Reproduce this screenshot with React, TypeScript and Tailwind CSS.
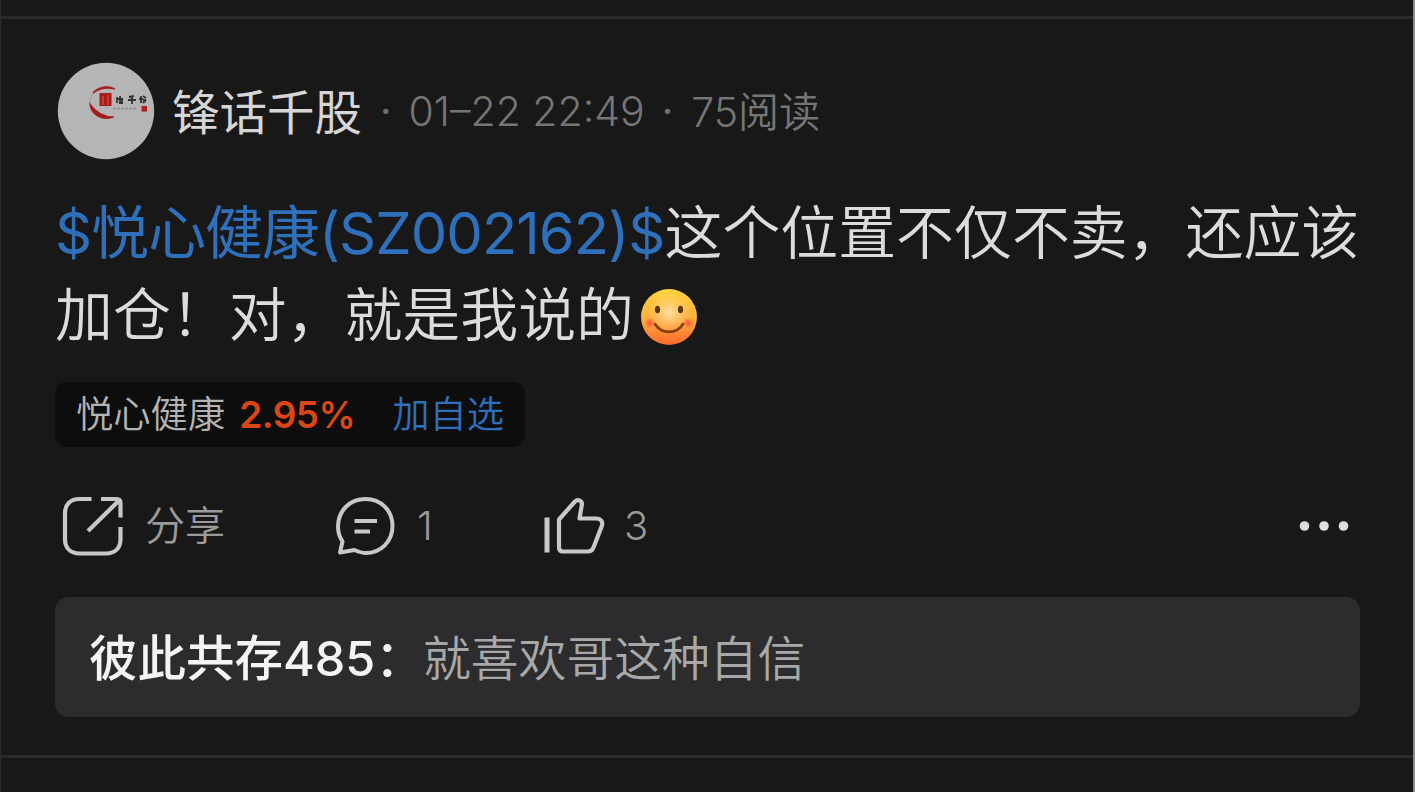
function Avatar() {
  return (
    <svg className="h-[98px] w-[98px] flex-shrink-0" viewBox="0 0 98 98">
      <circle cx="49" cy="49" r="48.200" fill="#b5b5b5" />
      {/* Brush ring around the seal */}
      <path
        d="M57 26C47 21 34 28 33 40c-1 11 9 18 24 15"
        fill="none"
        stroke="#b5a0a0"
        strokeWidth="1.400"
      />
      <path
        d="M58 27C50 23 41 25 36 31c5-4 13-6 22-4ZM33 42c1 11 12 17 24 13-9 0-17-3-24-13Z"
        fill="#a51c1c"
        stroke="#a51c1c"
        strokeWidth="1.200"
      />
      <rect x="42.500" y="31" width="12" height="13" fill="#b01818" />
      <path
        d="M46 34v9M51 33v10"
        stroke="#c98080"
        strokeWidth="0.800"
        fill="none"
      />
      <path
        d="M60 35v6M63 34v7M61 37h5M65 38v4M62 41h4M72 35l5-1M71 38h8M75 35v7M84 34v7M82 37h4M86 34l3 2M86 38h3M86 41l3-3"
        stroke="#333"
        strokeWidth="1.800"
        fill="none"
      />
      <path d="M56 46.500h23" stroke="#959595" strokeWidth="2" strokeDasharray="3 1" />
      <rect x="84.500" y="44" width="5.500" height="5.500" fill="#b01c1c" />
    </svg>
  );
}

function SmileIcon() {
  return (
    <svg className="h-[58px] w-[58px]" viewBox="0 0 58 58">
      <defs>
        <linearGradient id="face" x1="0" y1="0" x2="0" y2="1">
          <stop offset="0" stopColor="#ffd53c" />
          <stop offset="0.5" stopColor="#ffb040" />
          <stop offset="1" stopColor="#ff6a2c" />
        </linearGradient>
        <radialGradient id="glow" cx="0.5" cy="0.42" r="0.38">
          <stop offset="0" stopColor="#ffe6b0" stopOpacity="0.9" />
          <stop offset="1" stopColor="#ffd070" stopOpacity="0" />
        </radialGradient>
        <radialGradient id="cheek">
          <stop offset="0" stopColor="#ff4a35" stopOpacity="0.95" />
          <stop offset="1" stopColor="#ff5a35" stopOpacity="0" />
        </radialGradient>
      </defs>
      <circle cx="29" cy="29" r="28" fill="url(#face)" />
      <circle cx="29" cy="29" r="28" fill="url(#glow)" />
      <circle cx="10" cy="35" r="5.500" fill="url(#cheek)" />
      <circle cx="48" cy="35" r="5.500" fill="url(#cheek)" />
      <ellipse cx="17.500" cy="21.500" rx="2.600" ry="3.800" fill="#573611" />
      <ellipse cx="40.500" cy="21.500" rx="2.600" ry="3.800" fill="#573611" />
      <path
        d="M15 36c6 10.500 22 10.500 28 0"
        stroke="#82410f"
        strokeWidth="2.600"
        strokeLinecap="round"
        fill="none"
      />
    </svg>
  );
}

function ShareIcon() {
  return (
    <svg
      className="h-[64px] w-[64px]"
      viewBox="0 0 64 64"
      fill="none"
      stroke="#c8c8c8"
      strokeWidth="4.200"
      strokeLinejoin="round"
    >
      <path d="M30.500 5H18.500C9.500 5 4 10.500 4 19v26c0 9 5.500 14.500 14.500 14.500H45c9 0 14.500-5.500 14.500-14.500V33" />
      <path d="M40 5h15.500c2.800 0 4 1.200 4 4v14.500" />
      <path d="M58 6.500 27 37" />
    </svg>
  );
}

function CommentIcon() {
  return (
    <svg
      className="h-[64px] w-[64px]"
      viewBox="0 0 64 64"
      fill="none"
      stroke="#c8c8c8"
      strokeWidth="4"
      strokeLinejoin="round"
    >
      <path d="M6 58.500 8.500 47.500C5.500 43 4 38 4 32.500 4 16.500 16 5 31.500 5S58.500 16.500 58.500 32 47 59 31.500 59C27.500 59 24 57.500 20.500 56Z" />
      <path d="M20.500 27H43M20.500 37.500h15.500" />
    </svg>
  );
}

function LikeIcon() {
  return (
    <svg
      className="h-[64px] w-[64px]"
      viewBox="0 0 64 64"
      fill="none"
      stroke="#c8c8c8"
      strokeWidth="4.200"
      strokeLinejoin="round"
    >
      <path d="M4 23.500V58.500" strokeWidth="5" />
      <path d="M16 25.500 31.500 8C34.500 4.500 39.500 6.500 38.800 11L36.500 24.500H53c5 0 7.300 3.500 5.800 7.500L50.500 53.500c-1.200 3-2.500 4-5.500 4H20c-3 0-4-1.500-4-4Z" />
    </svg>
  );
}

function MoreIcon() {
  return (
    <svg className="h-[16px] w-[54px]" viewBox="0 0 54 16" fill="#dedede">
      <circle cx="7.500" cy="8" r="4.800" />
      <circle cx="27" cy="8" r="4.800" />
      <circle cx="46.500" cy="8" r="4.800" />
    </svg>
  );
}

export default function App() {
  return (
    <div className="flex h-[792px] w-[1415px] flex-col overflow-hidden whitespace-nowrap border-l border-r-2 border-l-[#2c2c2c] border-r-[#8c8c8c] bg-[#181818] font-['Inter','Noto_Sans_CJK_SC',sans-serif]">
      <div className="h-[16px] flex-shrink-0" />
      <div className="h-[742px] flex-shrink-0 border-y-[3px] border-[#2a2a2a] pr-[53px] pl-[54px]">
        {/* Author line */}
        <div className="mt-[43px] flex h-[98px] items-center pl-[2px]">
          <Avatar />
          <span className="mt-[4px] ml-[17px] text-[47.500px] leading-[60px] text-[#d6d6d6]">
            锋话千股
          </span>
          <span className="ml-[18px] text-[40px] leading-[60px] text-[#707070]">·</span>
          <span className="ml-[17px] text-[41px] leading-[60px] font-[350] text-[#757575]">
            01–22 22:49
          </span>
          <span className="ml-[17px] text-[40px] leading-[60px] text-[#707070]">·</span>
          <span className="mt-[2px] ml-[18px] text-[41px] leading-[60px] font-[350] text-[#757575]">
            75阅读
          </span>
        </div>

        {/* Post body */}
        <div className="mt-[32px] text-[57.900px] leading-[82px] text-[#d4d4d4]">
          <div className="flex h-[82px]">
            <span className="tracking-[-0.950px] text-[#2f70bd]">$悦心健康(SZ002162)$</span>
            <span className="font-[350] text-[#dcdcdc]">这个位置不仅不卖，还应该</span>
          </div>
          <div className="flex h-[82px] items-center">
            <span className="font-[350] text-[#dcdcdc]">加仓！对，就是我说的</span>
            <span className="mt-[4px] ml-[6px]">
              <SmileIcon />
            </span>
          </div>
        </div>

        {/* Stock tag */}
        <div className="mt-[26px] flex h-[65px] w-[470px] items-center rounded-[12px] bg-[#0d0d0d] pl-[21px] text-[37.300px] leading-[60px]">
          <span className="font-[350] text-[#b4b4b4]">悦心健康</span>
          <span className="ml-[14px] text-[37px] font-semibold tracking-[-0.500px] text-[#dc4617]">
            2.95%
          </span>
          <span className="ml-[37px] font-[350] text-[#2f70bd]">加自选</span>
        </div>

        {/* Actions */}
        <div className="mt-[46px] flex h-[66px] items-center pl-[6px] text-[40px] leading-[60px] font-[350] text-[#9a9a9a]">
          <ShareIcon />
          <span className="ml-[20px] w-[189px]">分享</span>
          <CommentIcon />
          <span className="ml-[19px] w-[126px]">1</span>
          <LikeIcon />
          <span className="ml-[17px]">3</span>
          <span className="mr-[9px] ml-auto">
            <MoreIcon />
          </span>
        </div>

        {/* Top reply */}
        <div className="mt-[38px] flex h-[120px] w-[1305px] items-center rounded-[14px] bg-[#2c2c2e] pl-[34px] text-[48px] leading-[70px]">
          <span className="mt-[3px] w-[334px] text-[48.500px] font-medium text-[#f4f4f4]">
            彼此共存485：
          </span>
          <span className="mt-[3px] text-[47.800px] font-[350] text-[#a8a8a8]">就喜欢哥这种自信</span>
        </div>
      </div>
    </div>
  );
}
